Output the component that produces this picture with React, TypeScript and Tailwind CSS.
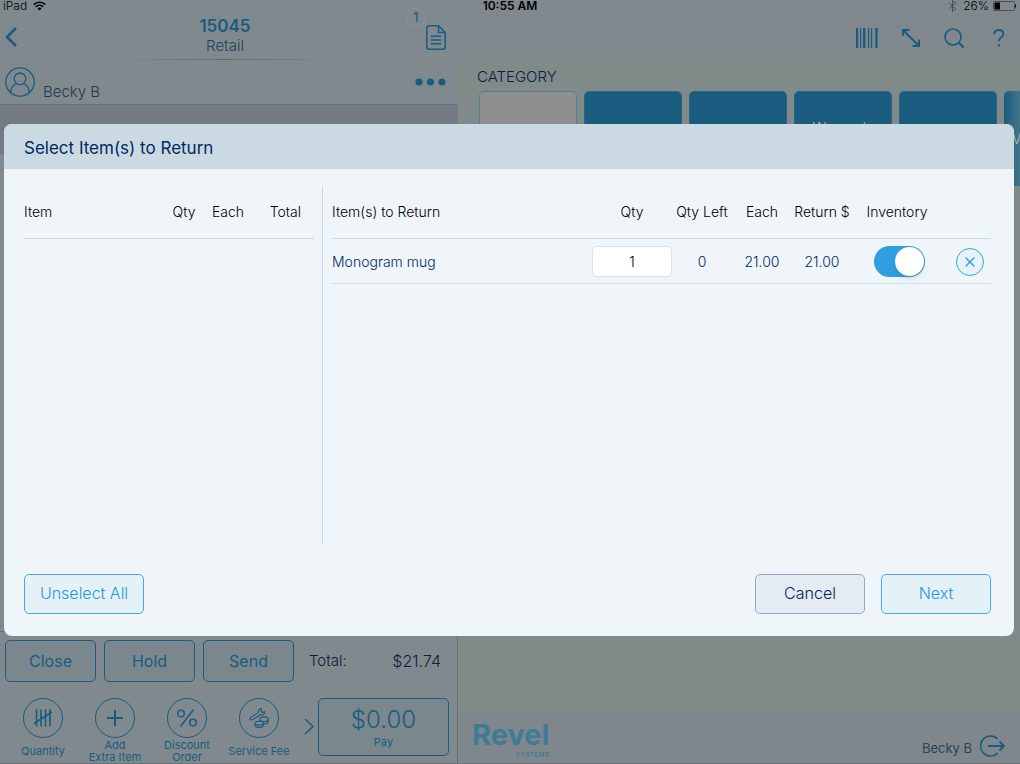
import { useState } from 'react';
import type { ReactNode } from 'react';

const categories = ['', '', '', "Women's", ''];

interface ActionProps {
  label: ReactNode;
  children: ReactNode;
}

function BackIcon() {
  return (
    <svg width="14" height="22" viewBox="0 0 14 22" fill="none" stroke="currentColor" strokeWidth="2.6">
      <path d="M12 2 3 11l9 9" />
    </svg>
  );
}

function WifiIcon() {
  return (
    <svg width="13" height="10" viewBox="0 0 13 10" fill="none" stroke="currentColor" strokeWidth="1.5">
      <path d="M.7 3.6a8.2 8.2 0 0 1 11.6 0M2.8 5.9a5.2 5.2 0 0 1 7.4 0" />
      <path d="M6.5 9.6 4.5 7.5a2.8 2.8 0 0 1 4 0z" fill="currentColor" stroke="none" />
    </svg>
  );
}

function BluetoothIcon() {
  return (
    <svg width="9" height="12" viewBox="0 0 9 12" fill="none" stroke="currentColor" strokeWidth="1">
      <path d="M1 3.2 7.5 8.8 4.5 11.5V.5L7.5 3.2 1 8.8" />
    </svg>
  );
}

function BatteryIcon() {
  return (
    <svg width="24" height="10" viewBox="0 0 24 10">
      <rect x=".5" y=".5" width="21" height="9" rx="1" fill="none" stroke="#4a4f52" />
      <rect x="1.5" y="1.5" width="5.5" height="7" fill="#000" />
      <path d="M22 3.2c1.4.3 1.4 3.3 0 3.6z" fill="#000" />
    </svg>
  );
}

function ReceiptIcon() {
  return (
    <svg width="20" height="25" viewBox="0 0 20 25" fill="none" stroke="currentColor" strokeWidth="1.5">
      <path d="M2.8.8h9.7l6.7 6.7v14.7a2 2 0 0 1-2 2H2.8a2 2 0 0 1-2-2V2.8a2 2 0 0 1 2-2z" />
      <path d="M12.5.8v6.7h6.7M5 11.2h10M5 15h10M5 18.8h10" />
    </svg>
  );
}

function PersonIcon() {
  return (
    <svg width="30" height="30" viewBox="0 0 30 30" fill="none" stroke="currentColor" strokeWidth="1.3">
      <circle cx="15" cy="15" r="14.2" />
      <circle cx="15" cy="11.8" r="5.8" />
      <path d="M5.6 25.6c.6-5.2 3-8.3 6.2-8.9M24.4 25.6c-.6-5.2-3-8.3-6.2-8.9" />
    </svg>
  );
}

function DotsIcon() {
  return (
    <svg width="31" height="8" viewBox="0 0 31 8" fill="currentColor">
      <circle cx="4" cy="4" r="3.6" />
      <circle cx="15.5" cy="4" r="3.6" />
      <circle cx="27" cy="4" r="3.6" />
    </svg>
  );
}

function BarcodeIcon() {
  return (
    <svg width="22" height="20" viewBox="0 0 22 20" fill="currentColor">
      <path d="M0 0h2.2v20H0zM4 0h1.2v20H4zM7 0h2.4v20H7zM12 0h1.2v20H12zM15 0h1.2v20H15zM19.3 0h2.4v20h-2.4z" />
    </svg>
  );
}

function ExpandIcon() {
  return (
    <svg width="18" height="18" viewBox="0 0 18 18" fill="none" stroke="currentColor" strokeWidth="2">
      <path d="M1 6.8V1h6.5M1 1l16 16M10.5 17H17v-6.5" />
    </svg>
  );
}

function SearchIcon() {
  return (
    <svg width="21" height="21" viewBox="0 0 21 21" fill="none" stroke="currentColor">
      <circle cx="9" cy="9" r="8" strokeWidth="1.6" />
      <path d="m14.5 14.5 5.2 5" strokeWidth="2.4" />
    </svg>
  );
}

function HelpIcon() {
  return (
    <svg width="12" height="18" viewBox="0 0 12 18" fill="none" stroke="currentColor" strokeWidth="1.8">
      <path d="M1.2 5.2C1.3 2.5 3.2 1 5.8 1s4.6 1.5 4.6 3.9c0 3.4-4.6 3.6-4.6 7.4" />
      <circle cx="5.8" cy="16.3" r="1.2" fill="currentColor" stroke="none" />
    </svg>
  );
}

function TallyIcon() {
  return (
    <svg width="18" height="18" viewBox="0 0 18 18" fill="none" stroke="currentColor" strokeWidth="1.6">
      <path d="M2.5.5v17M7 .5v17M11.5.5v17M16 .5v17M0 14.5 18 3" />
    </svg>
  );
}

function PlusIcon() {
  return (
    <svg width="18" height="18" viewBox="0 0 18 18" fill="none" stroke="currentColor" strokeWidth="2">
      <path d="M9 1v16M1 9h16" />
    </svg>
  );
}

function PercentIcon() {
  return (
    <svg width="20" height="18" viewBox="0 0 20 18" fill="none" stroke="currentColor" strokeWidth="1.5">
      <circle cx="4" cy="4.5" r="3.3" />
      <circle cx="16" cy="13.5" r="3.3" />
      <path d="M16.5.5 3.5 17.5" />
    </svg>
  );
}

function WrenchIcon() {
  return (
    <svg width="20" height="20" viewBox="0 0 20 20" fill="none" stroke="currentColor" strokeWidth="1.1">
      <path d="M1.2 10 9.2 4.6C8.8 2.6 10.2.8 12.4.9l-.5 2.3 1.5 1.3 2.3-.9c.3 2.3-1.8 4-4 3.1L3.2 11.8c-1.5.7-2.9-.9-2-1.8z" />
      <ellipse cx="15" cy="11.2" rx="4.2" ry="2.3" />
      <path d="M19.2 11.2v2.4c0 1.3-2 2.3-4.2 2.3M10.8 11.2v1.3" />
      <ellipse cx="10.2" cy="15.2" rx="4.2" ry="2" />
      <path d="M6 15.2v2c0 1.2 2 2.2 4.2 2.2s4.2-1 4.2-2.2v-2" />
    </svg>
  );
}

function LogoutIcon() {
  return (
    <svg width="25" height="22" viewBox="0 0 25 22" fill="none" stroke="currentColor">
      <path d="M17.7 4A10 10 0 1 0 17.7 18" strokeWidth="1.5" />
      <path d="M8 11h16M19.5 6.5 24 11l-4.5 4.5" strokeWidth="1.8" />
    </svg>
  );
}

function Action({ label, children }: ActionProps) {
  return (
    <button type="button" className="flex w-[72px] flex-col items-center text-[11px] leading-3">
      <span className="flex size-10 shrink-0 items-center justify-center rounded-full border border-[#195c80]">
        {children}
      </span>
      <span className="flex h-[25px] items-center whitespace-nowrap">
        <span>{label}</span>
      </span>
    </button>
  );
}

function OrderPanel() {
  return (
    <section className="flex w-[44.9%] shrink-0 flex-col">
      <header className="grid h-[46px] grid-cols-[1fr_auto_1fr] items-center pl-1 pr-3">
        <button type="button" aria-label="Back" className="justify-self-start">
          <BackIcon />
        </button>
        <div className="flex h-full w-[216px] flex-col items-center">
          <h1 className="pt-0.5 text-[17px] font-semibold leading-5">15045</h1>
          <p className="text-[15px] font-light leading-5 text-[#1f3f58]">Retail</p>
          <div className="mt-auto h-px w-full bg-linear-to-r from-transparent via-[#626a6e] to-transparent" />
        </div>
        <button type="button" aria-label="Open orders" className="relative justify-self-end">
          <ReceiptIcon />
          <span className="absolute -left-5 -top-[17px] flex size-5 items-center justify-center rounded-full border border-[#8d9494] text-[13px]">
            1
          </span>
        </button>
      </header>
      <div className="flex h-11 items-center gap-2 pl-[5px] pr-3">
        <PersonIcon />
        <span className="flex-1 pt-5 text-[15px] font-light text-[#1f3950]">Becky B</span>
        <button type="button" aria-label="More">
          <DotsIcon />
        </button>
      </div>
      <div className="h-[50px] border-y border-[#6b7176] bg-[#757b84]" />
      <div className="flex-1" />
      <footer className="border-r border-t border-[#6b7176] pt-2">
        <div className="flex items-center pl-[5px] pr-4 text-[16px] font-light text-[#0a1f3d]">
          <div className="flex gap-2 text-[#195c80]">
            {['Close', 'Hold', 'Send'].map(name => (
              <button
                key={name}
                type="button"
                className="h-[42px] w-[91px] rounded-[5px] border border-[#195c80] bg-[#7a888d] font-normal"
              >
                {name}
              </button>
            ))}
          </div>
          <span className="ml-[15px] flex-1 text-[15px]">Total:</span>
          <span>$21.74</span>
        </div>
        <div className="flex items-start pl-[7px] pr-2 pt-4">
          <div className="flex">
            <Action label="Quantity">
              <TallyIcon />
            </Action>
            <Action label={<>Add<br />Extra Item</>}>
              <PlusIcon />
            </Action>
            <Action label={<>Discount<br />Order</>}>
              <PercentIcon />
            </Action>
            <Action label="Service Fee">
              <WrenchIcon />
            </Action>
          </div>
          <button type="button" aria-label="More actions" className="ml-auto mr-1 mt-5">
            <svg width="10" height="17" viewBox="0 0 10 17" fill="none" stroke="currentColor" strokeWidth="1.5">
              <path d="m1 1 8 7.5L1 16" />
            </svg>
          </button>
          <button
            type="button"
            className="flex h-[58px] w-[131px] flex-col items-center justify-center rounded-[5px] border border-[#195c80] bg-[#7a888d]"
          >
            <span className="pt-0.5 text-[24px] font-light leading-7">$0.00</span>
            <span className="text-[11px] leading-4">Pay</span>
          </button>
        </div>
      </footer>
    </section>
  );
}

function CatalogPanel() {
  return (
    <section className="flex min-w-0 flex-1 flex-col bg-[#7f8a89]">
      <header className="flex h-[46px] items-center justify-end gap-6 bg-[#80888d] pr-[15px] pt-0.5">
        <button type="button" aria-label="Scan barcode">
          <BarcodeIcon />
        </button>
        <button type="button" aria-label="Expand">
          <ExpandIcon />
        </button>
        <button type="button" aria-label="Search">
          <SearchIcon />
        </button>
        <button type="button" aria-label="Help" className="pl-1">
          <HelpIcon />
        </button>
      </header>
      <h2 className="px-[19px] pt-[7px] text-[15px] font-light leading-5 text-[#0a2240]">CATEGORY</h2>
      <div className="flex gap-[7px] overflow-hidden pl-[21px] pt-1 text-[14px] font-light leading-5 text-[#b4bfc5]">
        {categories.map((name, i) => (
          <button
            key={i}
            type="button"
            aria-label={name || 'Category'}
            className={`flex h-[95px] w-[98px] shrink-0 justify-center rounded-[5px] border pt-[26px] ${
              i === 0 ? 'border-[#557f98] bg-[#8f8f8f]' : 'border-[#2b6685] bg-[#195c80]'
            }`}
          >
            {name}
          </button>
        ))}
        <button
          type="button"
          className="h-[95px] w-[98px] shrink-0 rounded-[5px] bg-linear-to-r from-[#195c80] to-[#407487] to-15% pl-2 text-left"
        >
          V
        </button>
      </div>
      <div className="flex-1" />
      <footer className="flex h-[49px] items-start justify-between bg-[#7f868c] pl-[14px] pr-[15px]">
        <div className="flex flex-col items-end pt-1 text-[#3e7c96]">
          <span className="text-[29px] font-bold leading-[34px]">Revel</span>
          <span className="text-[6px] font-semibold leading-[6px] tracking-widest">SYSTEMS</span>
        </div>
        <button type="button" className="flex items-center gap-2 pt-[19px]">
          <span className="pt-1.5 text-[13px] text-[#2c4358]">Becky B</span>
          <LogoutIcon />
        </button>
      </footer>
    </section>
  );
}

function ReturnDialog() {
  const [qty, setQty] = useState('1');
  const [inventory, setInventory] = useState(true);

  return (
    <div
      role="dialog"
      aria-labelledby="return-title"
      className="w-full overflow-hidden rounded-lg bg-[#f0f5fa] text-[#002b62]"
    >
      <header className="flex h-[45px] items-center bg-[#cbd9e2] px-5 pt-1">
        <h2 id="return-title" className="text-[17px]">
          Select Item(s) to Return
        </h2>
      </header>
      <div className="flex min-h-[376px] pl-5 pr-[23px] pt-[17px] text-[14px] font-light">
        <div className="w-[290px] shrink-0">
          <table className="w-full table-fixed">
            <thead>
              <tr className="h-[52px] border-b border-[#c8dae4] text-black">
                <th className="text-left font-light">Item</th>
                <th className="w-11 font-light">Qty</th>
                <th className="w-11 font-light">Each</th>
                <th className="w-[64px] pr-[13px] text-right font-light">Total</th>
              </tr>
            </thead>
          </table>
        </div>
        <div className="ml-2 flex-1 border-l border-[#c8dae4] pl-[9px]">
          <table className="w-full table-fixed text-center">
            <thead>
              <tr className="h-[52px] whitespace-nowrap border-b border-[#c8dae4] text-black">
                <th className="text-left font-light">Item(s) to Return</th>
                <th className="w-20 font-light">Qty</th>
                <th className="w-[60px] font-light">Qty Left</th>
                <th className="w-[60px] font-light">Each</th>
                <th className="w-[60px] font-light">Return $</th>
                <th className="w-[94px] pr-1 font-light">Inventory</th>
                <th className="w-[45px]" aria-label="Remove" />
              </tr>
            </thead>
            <tbody>
              <tr className="h-[45px] border-b border-[#d5dfe6] *:pt-0.5">
                <td className="text-left">Monogram mug</td>
                <td>
                  <input
                    aria-label="Quantity to return"
                    value={qty}
                    onChange={e => setQty(e.target.value)}
                    className="block h-[31px] w-20 rounded-[5px] border border-[#dde2e6] bg-white text-center text-black"
                  />
                </td>
                <td>0</td>
                <td>21.00</td>
                <td>21.00</td>
                <td>
                  <input
                    type="checkbox"
                    role="switch"
                    aria-label="Return to inventory"
                    checked={inventory}
                    onChange={e => setInventory(e.target.checked)}
                    className="mx-auto flex h-[31px] w-[51px] appearance-none items-center rounded-full bg-[#c8d2da] px-px before:size-[29px] before:rounded-full before:bg-white before:shadow-md checked:justify-end checked:bg-[#2f9fe0]"
                  />
                </td>
                <td>
                  <button
                    type="button"
                    aria-label="Remove item"
                    className="ml-auto mr-[7px] flex size-7 items-center justify-center rounded-full border border-[#35a4e2] bg-[#e6f2f8] text-[#2f9fe0]"
                  >
                    <svg width="10" height="10" viewBox="0 0 9 9" stroke="currentColor" strokeWidth="1.3">
                      <path d="m.7.7 7.6 7.6M8.3.7.7 8.3" />
                    </svg>
                  </button>
                </td>
              </tr>
            </tbody>
          </table>
        </div>
      </div>
      <footer className="flex gap-4 pb-[22px] pl-5 pr-[23px] pt-[29px] text-[16px]">
        <button
          type="button"
          className="mr-auto h-10 w-[120px] rounded-[5px] border border-[#45a9e2] bg-[#e4f1f7] pb-0.5 font-light text-[#1e98e0]"
        >
          Unselect All
        </button>
        <button
          type="button"
          className="h-10 w-[110px] rounded-[5px] border border-[#93a9c0] bg-[#e5ebf3] pb-0.5 font-light text-[#00225c]"
        >
          Cancel
        </button>
        <button
          type="button"
          className="h-10 w-[110px] rounded-[5px] border border-[#45a9e2] bg-[#e4f1f7] pb-0.5 font-light text-[#1e98e0]"
        >
          Next
        </button>
      </footer>
    </div>
  );
}

export default function App() {
  return (
    <div className="relative flex min-h-screen flex-col border-b border-[#6c7276] bg-[#80898e] font-['Inter','Liberation_Sans',sans-serif] text-[#195c80]">
      <div className="grid h-[14px] grid-cols-3 items-start px-[3px] text-[12px] leading-3 text-black">
        <span className="flex items-center gap-1.5 font-light">
          iPad <WifiIcon />
        </span>
        <span className="text-center font-semibold">10:55 AM</span>
        <span className="flex items-center justify-end gap-1 font-light">
          <span className="mr-0.5 text-[#4a4f52]">
            <BluetoothIcon />
          </span>
          26% <BatteryIcon />
        </span>
      </div>
      <main className="flex flex-1">
        <OrderPanel />
        <CatalogPanel />
      </main>
      <div className="absolute inset-0 flex items-start pl-1 pr-1.5 pt-[124px]">
        <ReturnDialog />
      </div>
    </div>
  );
}
